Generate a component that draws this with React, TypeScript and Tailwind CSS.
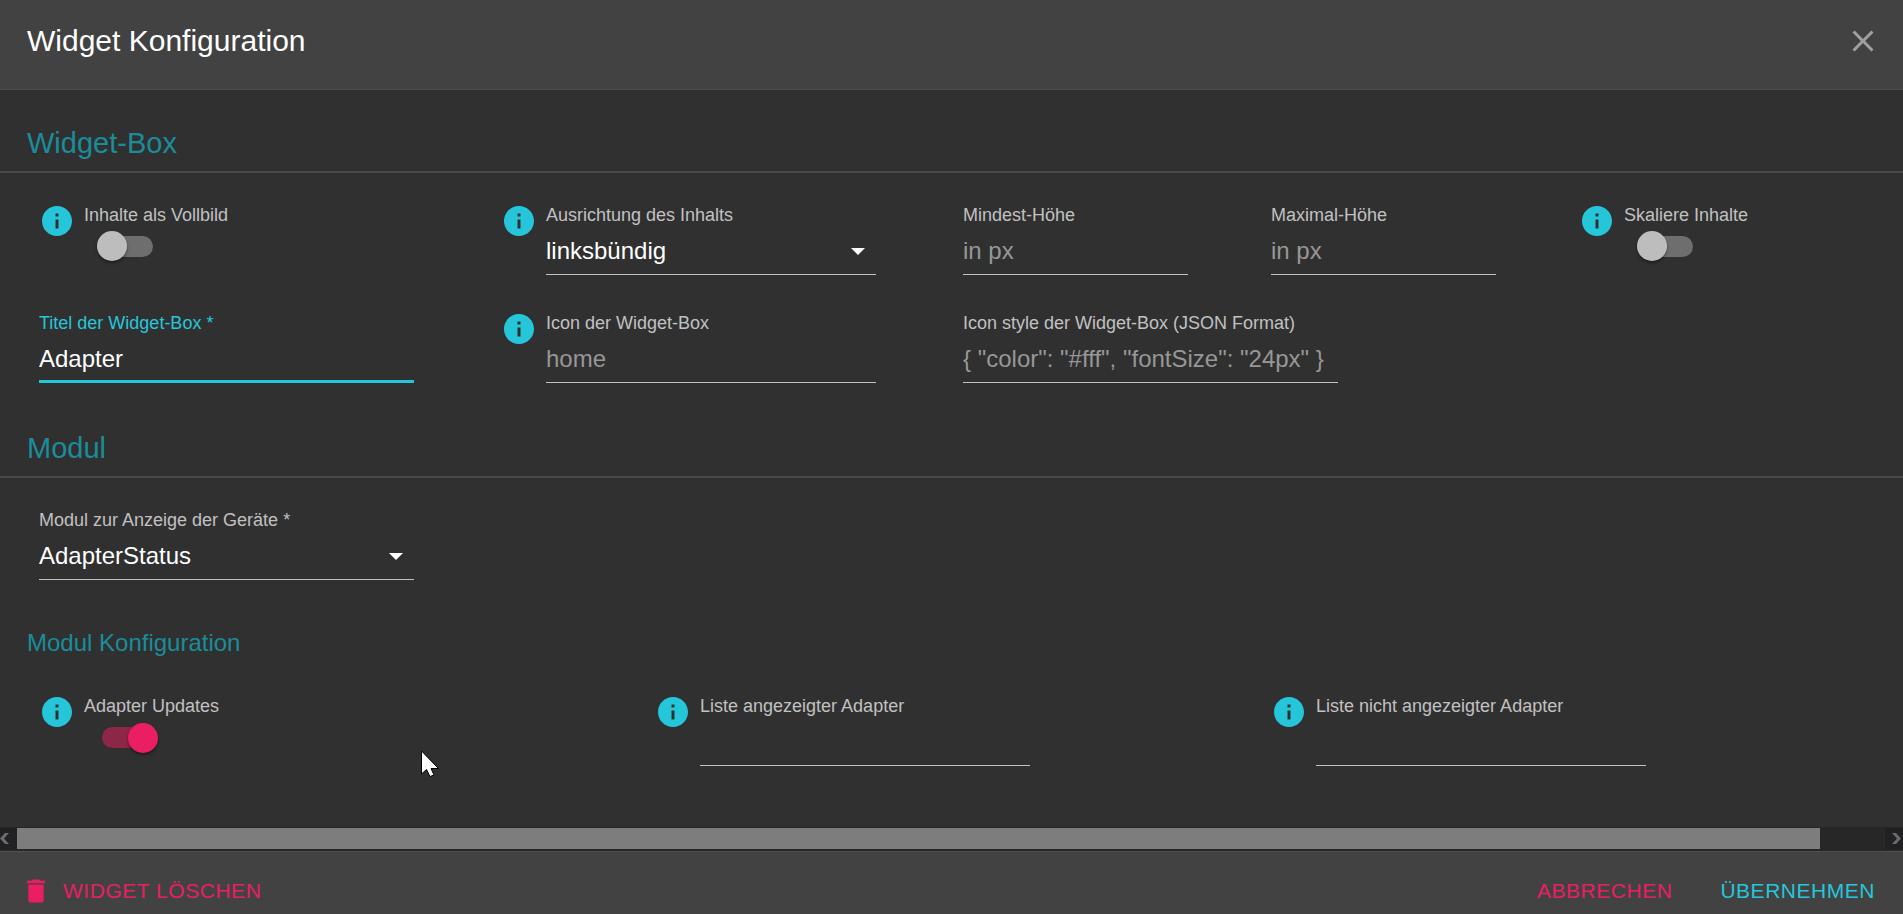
import { useId, useState } from 'react';
import type { ReactNode } from 'react';
import clsx from 'clsx';
import { MdClose, MdInfo } from 'react-icons/md';

interface FieldProps {
  label: string;
  className: string;
  info?: boolean;
  focused?: boolean;
  children: (id: string) => ReactNode;
}

/** Label above a control, with an optional info button in front. */
function Field({ label, className, info, focused, children }: FieldProps) {
  const id = useId();

  return (
    <div className={clsx('flex h-[72px] gap-[9px] px-3', className)}>
      {info && (
        <button type="button" aria-label={`Info: ${label}`} className="size-9 shrink-0 text-[#26c6da]">
          <MdInfo className="size-9" />
        </button>
      )}
      <div className="min-w-0">
        <label
          htmlFor={id}
          className={clsx(
            'block text-[18px] leading-6 whitespace-nowrap',
            focused ? 'text-[#26c6da]' : 'text-[#c1c1c1]',
          )}
        >
          {label}
        </label>
        {children(id)}
      </div>
    </div>
  );
}

interface TextFieldProps {
  label: string;
  className: string;
  width: string;
  info?: boolean;
  focused?: boolean;
  placeholder?: string;
  defaultValue?: string;
}

function TextField({ label, className, width, info, focused, placeholder, defaultValue }: TextFieldProps) {
  return (
    <Field label={label} className={className} info={info} focused={focused}>
      {(id) => (
        <input
          id={id}
          type="text"
          placeholder={placeholder}
          defaultValue={defaultValue}
          className={clsx(
            'block h-12 max-w-full border-b bg-transparent text-2xl text-white outline-none placeholder:text-[#979797]',
            focused ? 'border-[#26c6da] shadow-[inset_0_-2px_0_#26c6da]' : 'border-[#c1c1c1]',
            width,
          )}
        />
      )}
    </Field>
  );
}

interface SelectFieldProps {
  label: string;
  className: string;
  width: string;
  info?: boolean;
  options: string[];
}

function SelectField({ label, className, width, info, options }: SelectFieldProps) {
  return (
    <Field label={label} className={className} info={info}>
      {(id) => (
        <div className={clsx('relative max-w-full', width)}>
          <select
            id={id}
            className="block h-12 w-full appearance-none border-b border-[#c1c1c1] bg-transparent text-2xl text-white outline-none"
          >
            {options.map((option) => (
              <option key={option} className="bg-[#424242]">
                {option}
              </option>
            ))}
          </select>
          <svg
            viewBox="0 0 14 7"
            className="pointer-events-none absolute top-[21px] right-[11px] h-[7px] w-3.5 fill-white"
            aria-hidden="true"
          >
            <path d="M0 0h14L7 7z" />
          </svg>
        </div>
      )}
    </Field>
  );
}

function SwitchField({ label, className, initial = false }: { label: string; className: string; initial?: boolean }) {
  const [checked, setChecked] = useState(initial);

  return (
    <Field label={label} className={className} info>
      {(id) => (
        <div className="relative mt-[9px] ml-[18px] h-[21px] w-[51px]">
          <input
            id={id}
            type="checkbox"
            role="switch"
            checked={checked}
            onChange={(e) => setChecked(e.target.checked)}
            className={clsx(
              'block h-full w-full appearance-none rounded-full',
              checked ? 'bg-[#8c2748]' : 'bg-[#6e6e6e]',
            )}
          />
          <span
            className={clsx(
              'pointer-events-none absolute size-[30px] rounded-full shadow-[0_2px_3px_rgba(0,0,0,0.4)]',
              checked ? '-top-1 -right-[5px] bg-[#e91e63]' : '-top-[5px] -left-[5px] bg-[#bdbdbd]',
            )}
          />
        </div>
      )}
    </Field>
  );
}

function SectionTitle({ children }: { children: ReactNode }) {
  return (
    <h2 className="border-b-2 border-[#494949] px-[27px] pt-[35px] pb-2.5 text-[29px] leading-9 text-[#1a8c9a]">
      {children}
    </h2>
  );
}

export default function App() {
  return (
    <div className="relative flex h-screen flex-col overflow-hidden bg-[#303030] font-['Liberation_Sans',Arial,sans-serif]">
      {/* Header */}
      <header className="flex h-[90px] shrink-0 items-start justify-between border-b border-[#4f4f4f] bg-[#424242] pt-[23px] pr-[22px] pl-[27px]">
        <h1 className="text-[30px] leading-9 text-white">Widget Konfiguration</h1>
        <button type="button" aria-label="Schließen" className="text-[#a0a0a0]">
          <MdClose className="size-9" />
        </button>
      </header>

      {/* Form */}
      <main className="min-h-0 flex-1 overflow-hidden">
        <section>
          <SectionTitle>Widget-Box</SectionTitle>
          <div className="grid grid-cols-12 gap-y-9 pt-[30px] pr-7 pb-3 pl-[27px]">
            <SwitchField label="Inhalte als Vollbild" className="col-span-3" />
            <SelectField
              label="Ausrichtung des Inhalts"
              className="col-span-3"
              width="w-[330px]"
              info
              options={['linksbündig', 'zentriert', 'rechtsbündig']}
            />
            <TextField label="Mindest-Höhe" className="col-span-2" width="w-[225px]" placeholder="in px" />
            <TextField label="Maximal-Höhe" className="col-span-2" width="w-[225px]" placeholder="in px" />
            <SwitchField label="Skaliere Inhalte" className="col-span-2" />
            <TextField
              label="Titel der Widget-Box *"
              className="col-span-3"
              width="w-[375px]"
              focused
              defaultValue="Adapter"
            />
            <TextField
              label="Icon der Widget-Box"
              className="col-span-3"
              width="w-[330px]"
              info
              placeholder="home"
            />
            <TextField
              label="Icon style der Widget-Box (JSON Format)"
              className="col-span-6"
              width="w-[375px]"
              placeholder={'{ "color": "#fff", "fontSize": "24px" }'}
            />
          </div>
        </section>

        <section>
          <SectionTitle>Modul</SectionTitle>
          <div className="grid grid-cols-12 pt-[30px] pr-7 pb-3 pl-[27px]">
            <SelectField
              label="Modul zur Anzeige der Geräte *"
              className="col-span-3"
              width="w-[375px]"
              options={['AdapterStatus']}
            />
          </div>

          <h3 className="px-[27px] pt-[35px] text-2xl text-[#1a8c9a]">Modul Konfiguration</h3>
          <div className="grid grid-cols-12 pt-[35px] pr-7 pl-[27px]">
            <SwitchField label="Adapter Updates" className="col-span-4" initial />
            <TextField label="Liste angezeigter Adapter" className="col-span-4" width="w-[330px]" info />
            <TextField label="Liste nicht angezeigter Adapter" className="col-span-4" width="w-[330px]" info />
          </div>
        </section>
      </main>

      {/* Horizontal scrollbar */}
      <div className="flex h-6 shrink-0 bg-[#272727] pt-px pb-0.5 text-[#6c6c6c]">
        <button type="button" aria-label="Nach links" className="flex w-[17px] items-center bg-[#212123]">
          <svg viewBox="0 0 9 11" className="h-[11px] w-[9px] fill-current">
            <path d="M5 0h4L4 5.500l5 5.500H5L0 5.500z" />
          </svg>
        </button>
        <div className="flex-1">
          <div className="h-full w-[96.500%] bg-[#7d7d7d]" />
        </div>
        <button type="button" aria-label="Nach rechts" className="flex w-[18px] items-center justify-end bg-[#212123] pr-0.5">
          <svg viewBox="0 0 9 11" className="h-[11px] w-[9px] fill-current">
            <path d="M4 0H0l5 5.500L0 11h4l5-5.500z" />
          </svg>
        </button>
      </div>

      {/* Actions */}
      <footer className="flex h-[63px] shrink-0 items-start justify-between border-t border-[#4f4f4f] bg-[#424242] pt-[21px] pr-7 pl-[27px] text-[21px] leading-9 tracking-wide">
        <button type="button" className="flex items-center gap-[18px] text-[#e91e63]">
          <svg viewBox="5 3 14 18" className="h-6 w-[18px] fill-current" aria-hidden="true">
            <path d="M6 19c0 1.100.9 2 2 2h8c1.100 0 2-.9 2-2V7H6v12zM19 4h-3.500l-1-1h-5l-1 1H5v2h14V4z" />
          </svg>
          WIDGET LÖSCHEN
        </button>
        <div className="flex gap-12">
          <button type="button" className="text-[#e91e63]">
            ABBRECHEN
          </button>
          <button type="button" className="text-[#26c6da]">
            ÜBERNEHMEN
          </button>
        </div>
      </footer>

      {/* Mouse pointer */}
      <svg viewBox="0 0 18 27" className="pointer-events-none absolute top-[750px] left-[421px] h-[27px] w-[18px]" aria-hidden="true">
        <path d="M.5 1v23l5-4.500 3.500 7 4-1.500-3-6.500h7.500z" fill="#fff" stroke="#000" />
      </svg>
    </div>
  );
}
